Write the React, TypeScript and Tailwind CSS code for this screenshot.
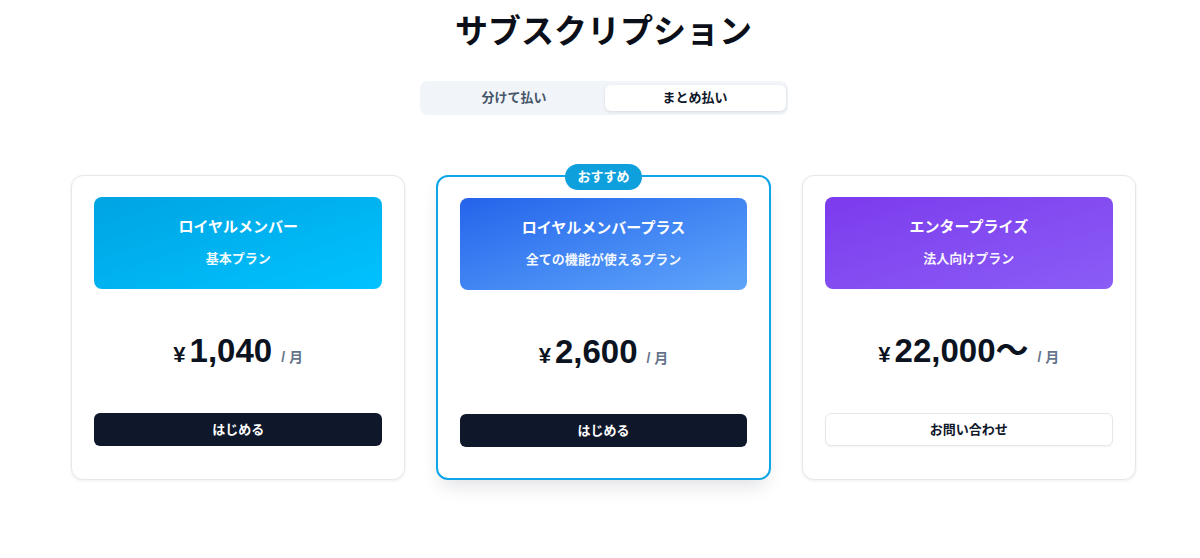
import React from 'react';

type Plan = {
  name: string;
  desc: string;
  price: string;
  cta: string;
  header: string;
  featured?: boolean;
  outline?: boolean;
};

const plans: Plan[] = [
  {
    name: 'ロイヤルメンバー',
    desc: '基本プラン',
    price: '1,040',
    cta: 'はじめる',
    header: 'bg-gradient-to-br from-[#00a3e2] to-[#00c3ff]',
  },
  {
    name: 'ロイヤルメンバープラス',
    desc: '全ての機能が使えるプラン',
    price: '2,600',
    cta: 'はじめる',
    header: 'bg-gradient-to-br from-[#2563eb] to-[#60a5fa]',
    featured: true,
  },
  {
    name: 'エンタープライズ',
    desc: '法人向けプラン',
    price: '22,000～',
    cta: 'お問い合わせ',
    header: 'bg-gradient-to-br from-[#7c3aed] to-[#8b5cf6]',
    outline: true,
  },
];

const PlanCard: React.FC<{ plan: Plan }> = ({ plan }) => {
  const cardCls = plan.featured
    ? 'relative rounded-xl border-2 border-[#0ea5e9] bg-white px-[22px] pt-[21px] pb-[31px] shadow-[0_10px_20px_-6px_rgba(15,23,42,0.15)]'
    : 'relative rounded-xl border border-gray-200 bg-white px-[22px] pt-[21px] pb-[32px] shadow-[0_1px_3px_rgba(15,23,42,0.08)]';

  return (
    <div className={cardCls}>
      {plan.featured && (
        <div className="absolute -top-[13px] left-1/2 -translate-x-1/2 h-[26px] px-3 rounded-full bg-[#0ea0dc] text-white text-[13px] font-bold leading-[26px] whitespace-nowrap">
          おすすめ
        </div>
      )}

      {/* ヘッダー */}
      <div className={`${plan.header} h-[92px] rounded-lg flex flex-col items-center pt-[19px] text-white`}>
        <p className="text-[15px] font-bold leading-[22px]">{plan.name}</p>
        <p className="mt-[12px] text-[13px] font-bold leading-[18px] text-white/95">{plan.desc}</p>
      </div>

      {/* 価格 */}
      <div className="h-[124px] flex items-center justify-center">
        <div className="flex items-baseline text-[#0b1220]">
          <span className="text-[22px] font-bold mr-[4px]">¥</span>
          <span className="text-[33px] font-bold leading-[40px]">{plan.price}</span>
          <span className="ml-[9px] text-[14px] font-bold text-[#64748b]">/ 月</span>
        </div>
      </div>

      {/* ボタン */}
      {plan.outline ? (
        <button className="w-full h-[33px] rounded-md border border-gray-200 bg-white text-[13px] font-bold text-[#0f172a] shadow-[0_1px_2px_rgba(15,23,42,0.05)]">
          {plan.cta}
        </button>
      ) : (
        <button className="w-full h-[33px] rounded-md bg-[#0f172a] text-[13px] font-bold text-white">
          {plan.cta}
        </button>
      )}
    </div>
  );
};

const App: React.FC = () => {
  return (
    <div
      className="min-h-screen bg-white"
      style={{ fontFamily: '"Liberation Sans", "Noto Sans CJK JP", sans-serif' }}
    >
      <div className="w-[1065px] ml-[71px] flex flex-col items-center pt-[12px]">
        <h1 className="text-[33px] font-bold leading-[40px] text-[#0b0f19]">サブスクリプション</h1>

        {/* 支払い切替 */}
        <div className="mt-[29px] flex rounded-lg bg-[#f1f5f9] pl-[4px] pr-[2px] py-[4px]">
          <button className="w-[181px] h-[26px] rounded-md text-[13px] font-bold text-[#475569]">
            分けて払い
          </button>
          <button className="w-[181px] h-[26px] rounded-md bg-white text-[13px] font-bold text-[#0f172a] shadow-[0_1px_3px_rgba(15,23,42,0.12)]">
            まとめ払い
          </button>
        </div>

        {/* プラン一覧 */}
        <div className="mt-[60px] w-full grid grid-cols-3 gap-[31px]">
          {plans.map((p) => (
            <PlanCard key={p.name} plan={p} />
          ))}
        </div>
      </div>
    </div>
  );
};

export default App;
